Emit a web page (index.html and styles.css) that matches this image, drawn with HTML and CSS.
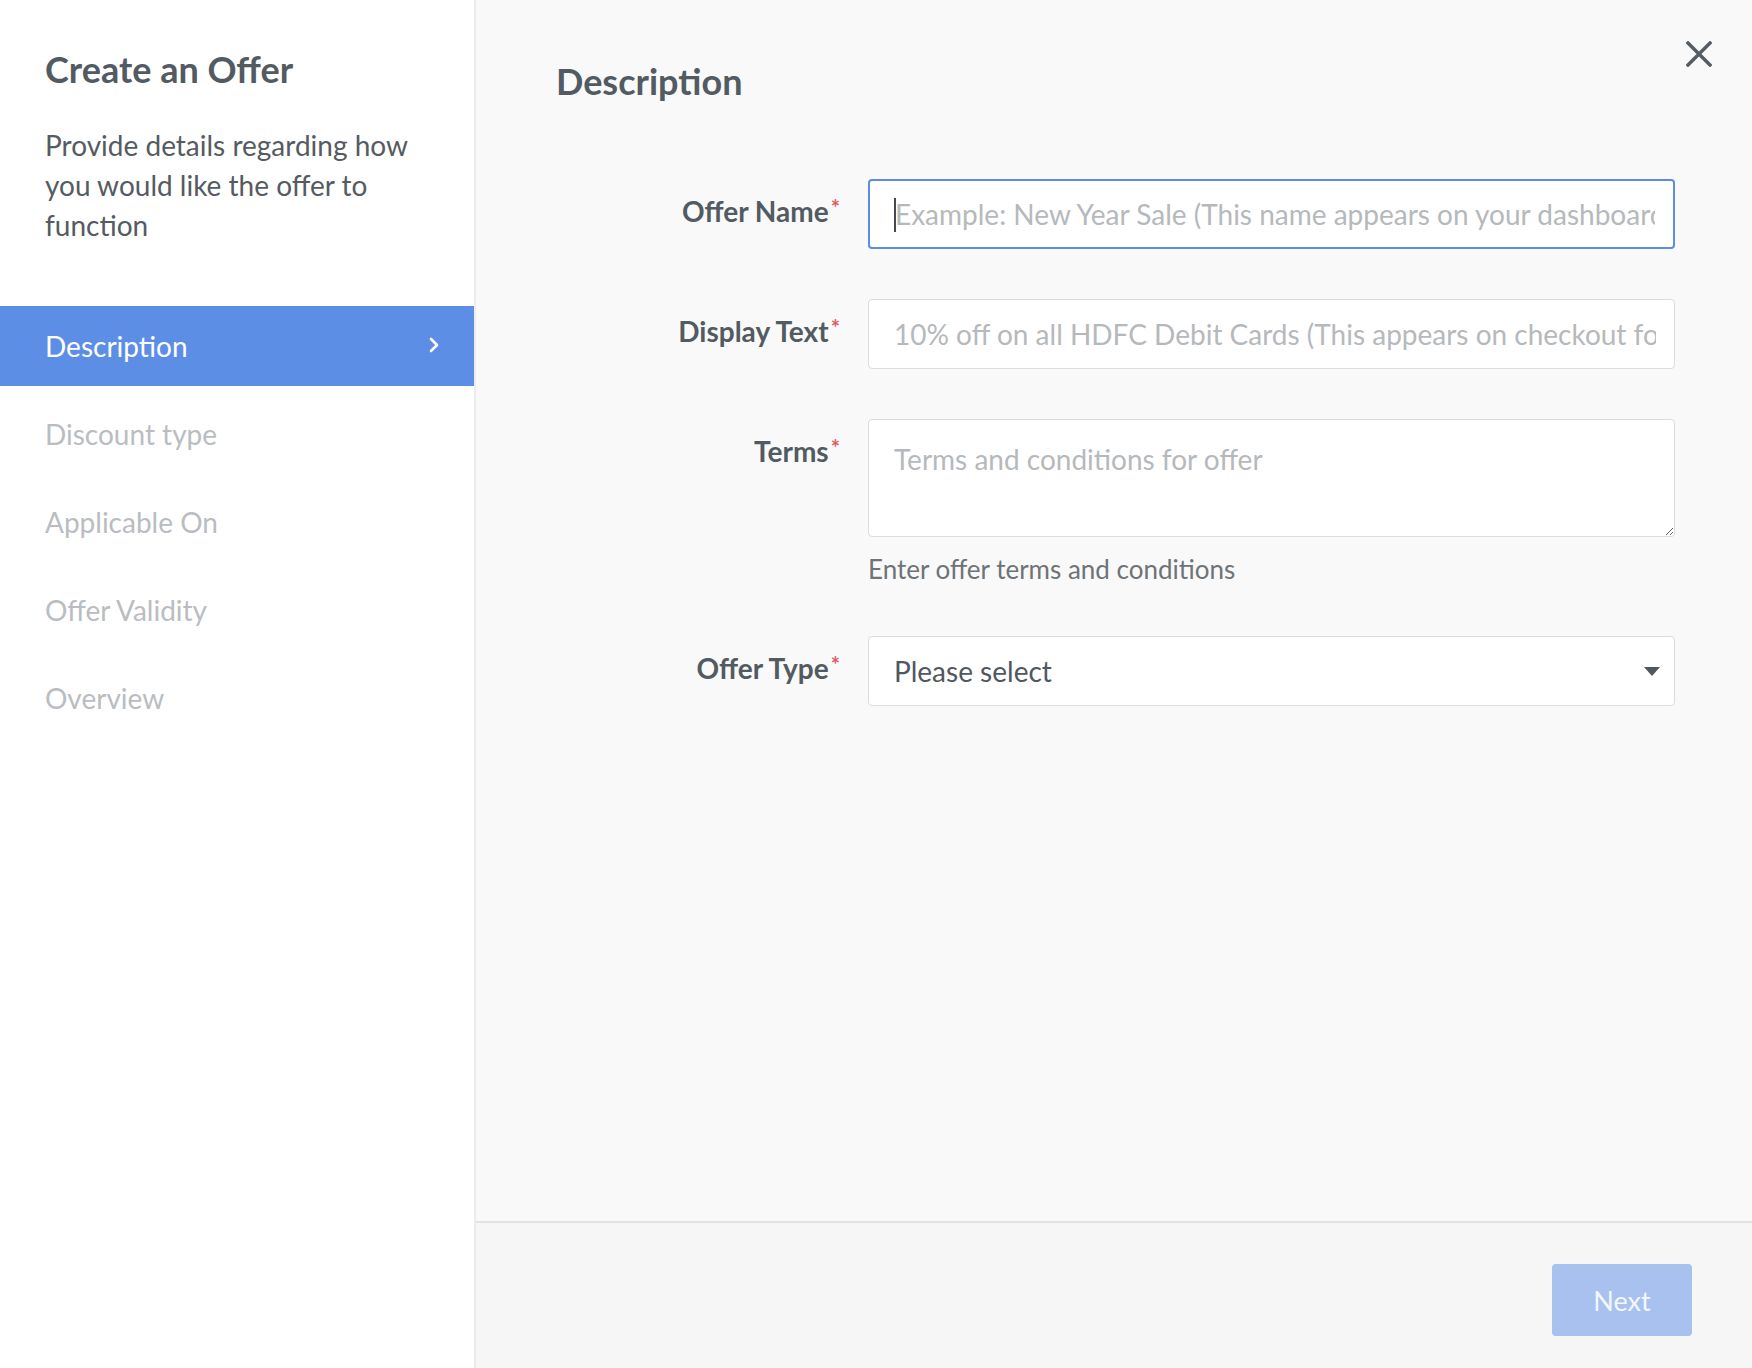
FILE: index.html
```html
<!DOCTYPE html>
<html lang="en">
<head>
<meta charset="utf-8">
<title>Create an Offer</title>
<link rel="stylesheet" href="styles.css">
</head>
<body>
<div class="app">
  <aside class="sidebar">
    <div class="sidebar-head">
      <h1 class="title">Create an Offer</h1>
      <p class="intro">Provide details regarding how you would like the offer to function</p>
    </div>
    <nav class="steps">
      <div class="step active">
        <span>Description</span>
        <svg class="chev" width="10" height="16" viewBox="0 0 10 16"><path d="M2 2 L8 8 L2 14" fill="none" stroke="#ffffff" stroke-width="2.6" stroke-linecap="round" stroke-linejoin="round"/></svg>
      </div>
      <div class="step">Discount type</div>
      <div class="step">Applicable On</div>
      <div class="step">Offer Validity</div>
      <div class="step">Overview</div>
    </nav>
  </aside>
  <main class="main">
    <section class="content">
      <button class="close" aria-label="Close">
        <svg width="26" height="26" viewBox="0 0 26 26"><path d="M2 2 L24 24 M24 2 L2 24" stroke="#555c63" stroke-width="3.4" stroke-linecap="square"/></svg>
      </button>
      <h2 class="heading">Description</h2>
      <div class="form">
        <div class="row">
          <label class="label">Offer Name<span class="req">*</span></label>
          <div class="field">
            <div class="input-wrap">
              <input class="input focused" type="text" placeholder="Example: New Year Sale (This name appears on your dashboard)">
              <span class="caret"></span>
            </div>
          </div>
        </div>
        <div class="row">
          <label class="label">Display Text<span class="req">*</span></label>
          <div class="field">
            <input class="input" type="text" placeholder="10% off on all HDFC Debit Cards (This appears on checkout form)">
          </div>
        </div>
        <div class="row">
          <label class="label">Terms<span class="req">*</span></label>
          <div class="field">
            <textarea class="input textarea" placeholder="Terms and conditions for offer"></textarea>
            <div class="help">Enter offer terms and conditions</div>
          </div>
        </div>
        <div class="row">
          <label class="label">Offer Type<span class="req">*</span></label>
          <div class="field">
            <div class="input select">
              <span>Please select</span>
              <svg width="16" height="9" viewBox="0 0 16 9"><path d="M0 0 H16 L8 9 Z" fill="#50575e"/></svg>
            </div>
          </div>
        </div>
      </div>
    </section>
    <footer class="footer">
      <button class="next">Next</button>
    </footer>
  </main>
</div>
</body>
</html>
```
FILE: styles.css
```css
* { box-sizing: border-box; }
html, body { margin: 0; padding: 0; }
body {
  font-family: Lato, "Open Sans", Arial, sans-serif;
  color: #555c63;
  background: #ffffff;
}
.app {
  display: flex;
  width: 1752px;
  height: 1368px;
  overflow: hidden;
}
.sidebar {
  width: 476px;
  flex: 0 0 476px;
  background: #ffffff;
  border-right: 2px solid #ececec;
}
.sidebar-head {
  padding: 49px 45px 0 45px;
}
.title {
  margin: 0;
  font-size: 36px;
  line-height: 40px;
  font-weight: 700;
  color: #535b62;
}
.intro {
  margin: 36px 0 0 0;
  font-size: 28px;
  line-height: 40px;
  color: #555b61;
}
.steps {
  margin-top: 61px;
}
.step {
  height: 80px;
  line-height: 80px;
  margin-bottom: 8px;
  padding: 0 35px 0 45px;
  font-size: 28px;
  color: #b9bdc1;
  display: flex;
  align-items: center;
  justify-content: space-between;
}
.step.active {
  background: #5d8ee5;
  color: #ffffff;
}
.chev { display: block; margin-top: -2px; }
.main {
  flex: 1;
  display: flex;
  flex-direction: column;
  min-width: 0;
}
.content {
  flex: 1;
  position: relative;
  background: #f9f9f9;
  padding: 59px 0 0 80px;
}
.close {
  position: absolute;
  top: 41px;
  right: 40px;
  width: 26px;
  height: 26px;
  padding: 0;
  border: 0;
  background: transparent;
}
.close svg { display: block; }
.heading {
  margin: 0;
  font-size: 36px;
  line-height: 44px;
  font-weight: 700;
  color: #535b62;
}
.form {
  margin-top: 76px;
}
.row {
  display: grid;
  grid-template-columns: 284px 807px;
  column-gap: 28px;
  margin-bottom: 50px;
}
.label {
  text-align: right;
  font-weight: 700;
  font-size: 28px;
  line-height: 32px;
  padding-top: 16px;
  color: #535b62;
  white-space: nowrap;
}
.req {
  color: #e05c5c;
  font-size: 22px;
  line-height: 0;
  vertical-align: 6px;
  margin-left: 2px;
}
.input-wrap {
  position: relative;
}
.input {
  display: block;
  width: 807px;
  height: 70px;
  margin: 0;
  padding: 0 18px 0 25px;
  border: 1px solid #dcdcdc;
  border-radius: 4px;
  background: #ffffff;
  font-family: Lato, "Open Sans", Arial, sans-serif;
  font-size: 28px;
  color: #50575e;
  outline: none;
}
.input::placeholder {
  color: #b6b9bc;
  opacity: 1;
}
.input.focused {
  border: 2px solid #5b8de4;
  padding-left: 25px;
}
.caret {
  position: absolute;
  left: 26px;
  top: 19px;
  width: 2px;
  height: 34px;
  background: #444a50;
}
.textarea {
  height: 118px;
  padding-top: 22px;
  line-height: 34px;
  resize: both;
}
.help {
  margin-top: 17px;
  margin-bottom: 2px;
  font-size: 26px;
  line-height: 30px;
  color: #6e7378;
}
.select {
  display: flex;
  align-items: center;
  justify-content: space-between;
  padding-right: 14px;
  color: #50575e;
}
.select svg { display: block; }
.footer {
  flex: 0 0 147px;
  height: 147px;
  background: #f6f6f6;
  border-top: 2px solid #e2e2e2;
  display: flex;
  justify-content: flex-end;
  align-items: flex-start;
  padding: 41px 60px 0 0;
}
.next {
  width: 140px;
  height: 72px;
  border: 0;
  border-radius: 4px;
  background: #a8c1ef;
  color: #f3f7fd;
  font-family: Lato, "Open Sans", Arial, sans-serif;
  font-size: 27px;
  padding: 0;
}
```
